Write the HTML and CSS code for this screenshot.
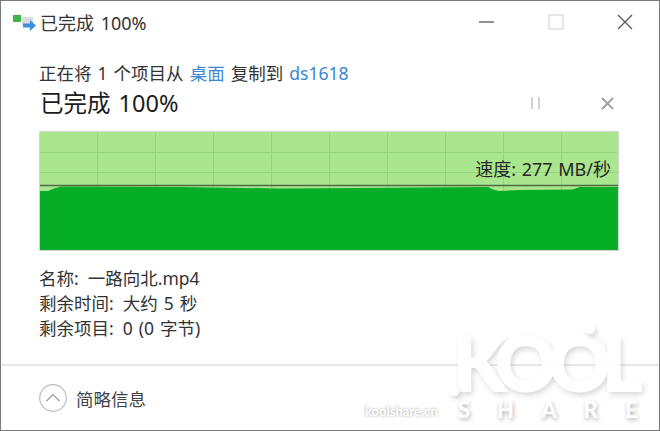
FILE: index.html
```html
<!DOCTYPE html>
<html lang="zh">
<head>
<meta charset="utf-8">
<title>已完成 100%</title>
<link rel="stylesheet" href="styles.css">
</head>
<body>
<div class="window">
  <header class="titlebar">
    <svg class="app-icon" width="26" height="20" viewBox="0 0 26 20">
      <rect x="0" y="2" width="8" height="7" fill="#3db54a"/>
      <rect x="9" y="4" width="11" height="8" fill="#dcdcdc"/>
      <path d="M10 10.500h7V7l6 5.500-6 5.500v-3.500h-7z" fill="#3b8fe0"/>
    </svg>
    <span class="title">已完成 100%</span>
    <div class="controls">
      <svg class="ctl" width="16" height="16" viewBox="0 0 16 16"><path d="M0 8h15" stroke="#555" stroke-width="1.300"/></svg>
      <svg class="ctl" width="16" height="16" viewBox="0 0 16 16"><rect x="1" y="1" width="14" height="14" fill="none" stroke="#dcdcdc" stroke-width="1.300"/></svg>
      <svg class="ctl" width="16" height="16" viewBox="0 0 16 16"><path d="M1 1l14 14M15 1L1 15" stroke="#555" stroke-width="1.200"/></svg>
    </div>
  </header>

  <main class="content">
    <p class="copy-line">正在将 1 个项目从 <a class="link">桌面</a> 复制到 <a class="link">ds1618</a></p>
    <div class="heading-row">
      <h1 class="heading">已完成 100%</h1>
      <svg class="pause" width="11" height="12" viewBox="0 0 11 12"><path d="M2 0v12M9 0v12" stroke="#d2d2d2" stroke-width="2"/></svg>
      <svg class="cancel" width="13" height="13" viewBox="0 0 13 13"><path d="M1 1l11 11M12 1L1 12" stroke="#a0a0a0" stroke-width="1.800"/></svg>
    </div>

    <div class="graph">
      <svg class="graph-svg" width="578" height="118" viewBox="0 0 578 118">
        <rect width="578" height="118" fill="#aae68e"/>
        <path d="M57.500 0v118M115.500 0v118M173.500 0v118M231.500 0v118M289.500 0v118M347.500 0v118M405.500 0v118M463.500 0v118M521.500 0v118M0 20.500h578M0 40.500h578" stroke="#95d37d" stroke-width="1"/>
        <path d="M0 59L8 59L14 56.500L21 54.500L140 55L239 56.500L320 56L448 55L453 57.500L459 59L480 58L532 57.500L540 55L578 55V118H0Z" fill="#06ad27"/>
        <path d="M0 53.500h578" stroke="#4d6a45" stroke-width="1.500"/>
      </svg>
      <span class="speed">速度: 277 MB/秒</span>
    </div>

    <dl class="details">
      <div class="row"><dt>名称:</dt><dd>一路向北.mp4</dd></div>
      <div class="row"><dt>剩余时间:</dt><dd>大约 5 秒</dd></div>
      <div class="row"><dt>剩余项目:</dt><dd>0 (0 字节)</dd></div>
    </dl>
  </main>

  <footer class="footer">
    <svg class="toggle" width="28" height="28" viewBox="0 0 28 28">
      <circle cx="14" cy="14" r="13.300" fill="#fff" stroke="#bdbdbd" stroke-width="1.200"/>
      <path d="M7.500 17l6.500-6.500 6.500 6.500" fill="none" stroke="#9a9a9a" stroke-width="1.200"/>
    </svg>
    <span class="toggle-label">简略信息</span>
  </footer>

  <div class="watermark">
    <span class="wm-url">koolshare.cn</span>
    <span class="wm-kool">KOOL</span>
    <span class="wm-dot wm-dot-a"></span>
    <span class="wm-dot wm-dot-b"></span>
    <span class="wm-share">SHAR<span class="wm-last">E</span></span>
  </div>
</div>
</body>
</html>
```

FILE: styles.css
```css
* { box-sizing: border-box; }
html, body { margin: 0; padding: 0; }
body {
  width: 660px;
  height: 431px;
  overflow: hidden;
  background: #fff;
  font-family: "Noto Sans", "Noto Sans CJK SC", sans-serif;
  color: #2a2a2a;
  font-size: 16px;
}
.window {
  position: relative;
  width: 660px;
  height: 431px;
  border: 1px solid #7b7b7b;
  display: flex;
  flex-direction: column;
  overflow: hidden;
}
.titlebar {
  height: 41px;
  display: flex;
  align-items: center;
  padding-left: 12px;
  flex: none;
}
.app-icon { flex: none; margin-right: 1px; margin-top: 2px; }
.title { font-size: 18px; word-spacing: 2px; color: #333; }
.controls {
  margin-left: auto;
  display: flex;
  gap: 53px;
  padding-right: 26px;
}
.ctl { display: block; }
.content { padding: 15px 40px 0 38px; flex: none; }
.copy-line {
  margin: 0;
  height: 33px;
  line-height: 33px;
  font-size: 17.500px;
  word-spacing: 1.500px;
  white-space: nowrap;
  color: #333;
}
.link { color: #3a86d2; }
.heading-row {
  display: flex;
  align-items: center;
  height: 26px;
  margin-bottom: 15px;
}
.heading {
  margin: 0 0 0 1px;
  font-size: 23.500px;
  word-spacing: 2px;
  line-height: 26px;
  font-weight: 400;
  color: #1c1c1c;
}
.pause { margin-left: auto; margin-right: 60px; }
.cancel { margin-right: 5px; }
.graph {
  position: relative;
  width: 580px;
  height: 120px;
  border: 1px solid #d4d4d4;
}
.graph-svg { display: block; }
.speed {
  position: absolute;
  right: 7px;
  top: 25px;
  font-size: 18px;
  word-spacing: 1px;
  line-height: 24px;
  color: #262626;
  white-space: nowrap;
}
.details { margin: 15px 0 0; }
.row {
  display: flex;
  gap: 9px;
  height: 25px;
  line-height: 25px;
  font-size: 17.500px;
  word-spacing: 1.500px;
  color: #333;
}
.row dt, .row dd { margin: 0; }
.footer {
  margin-top: 23px;
  flex: 1;
  border-top: 2px solid #e8e8e8;
  display: flex;
  align-items: center;
  padding-left: 38px;
  gap: 9px;
}
.toggle { flex: none; }
.toggle-label { font-size: 17.500px; color: #444; }
.watermark {
  position: absolute;
  right: 0;
  bottom: 0;
  width: 300px;
  height: 105px;
  color: #fff;
  opacity: .92;
  font-family: "Lato", sans-serif;
  font-weight: 900;
  text-shadow: 2px 3px 6px rgba(0,0,0,.2);
}
.wm-url {
  position: absolute;
  left: 6px;
  bottom: 11px;
  font-size: 13px;
  font-weight: 700;
  text-shadow: 0 0 3px rgba(0,0,0,.4);
}
.wm-kool {
  position: absolute;
  left: 94px;
  top: 7px;
  font-size: 76px;
  line-height: 60px;
  letter-spacing: -8px;
  -webkit-text-stroke: 2px #fff;
}
.wm-dot {
  position: absolute;
  border-radius: 50%;
  background: #fff;
  box-shadow: 2px 3px 5px rgba(0,0,0,.2);
}
.wm-dot-a { left: 91px; top: 62px; width: 9px; height: 9px; }
.wm-dot-b { left: 227px; top: 0; width: 9px; height: 9px; }
.wm-share {
  position: absolute;
  left: 99px;
  bottom: 8px;
  font-size: 22px;
  line-height: 24px;
  letter-spacing: 27px;
  white-space: nowrap;
  text-shadow: 1px 2px 4px rgba(0,0,0,.32);
}
.wm-last { letter-spacing: 0; }
```
